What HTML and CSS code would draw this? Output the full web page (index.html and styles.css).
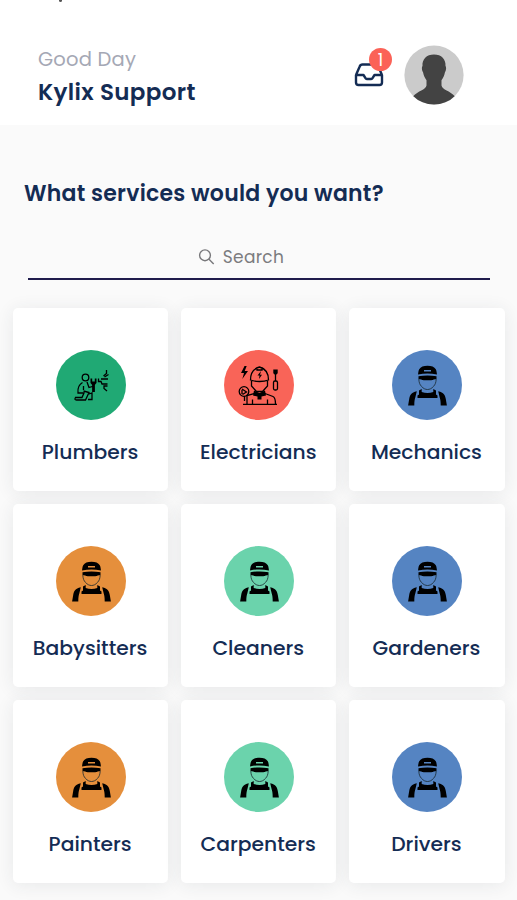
FILE: index.html
```html
<!DOCTYPE html>
<html lang="en">
<head>
  <meta charset="UTF-8">
  <meta name="viewport" content="width=device-width, initial-scale=1.0">
  <title>Services</title>
  <link rel="stylesheet" href="styles.css">
</head>
<body>
  <!-- shared worker icon -->
  <svg class="sprite" aria-hidden="true">
    <symbol id="worker" viewBox="-0.5 0 70 70">
      <path fill-rule="evenodd" d="M25.500 24.500c.3-1.400.3-3.500 1.200-5.200C28.200 16.700 31 15.700 35 15.700s6.800 1 8.300 3.600c.9 1.700.9 3.800 1.200 5.200C38 23.100 32 23.100 25.500 24.500zM31.500 20v1.600h7V20z"/>
      <path d="M26 26.200c6-1 12-1 18 0v2.800c-2.200 0-3.200 1.100-5.300 1.200h-7.400c-2.100-.1-3.100-1.200-5.300-1.200z"/>
      <path class="line" d="M26.300 29c.2 3.500 1 5.700 2.600 7.300 2 2.300 4 3.200 6.100 3.200s4.100-.9 6.100-3.200c1.600-1.600 2.400-3.800 2.600-7.300"/>
      <path d="M26.500 40.500l2.700-1.500v3c3.600 1.300 8 1.300 11.600 0v-3l2.700 1.500v4l1.500 1v2.500H25v-2.500l1.500-1z"/>
      <path d="M24.300 41.200c-5.700 1-7 4.300-7.600 7.800l-1.100 6.500h6.200c0-4 .3-6.200 1-8zM45.700 41.200c5.700 1 7 4.300 7.600 7.800l1.100 6.500h-6.200c0-4-.3-6.200-1-8z"/>
    </symbol>
  </svg>

  <header class="header">
    <span class="notch"></span>
    <div class="greeting">
      <p class="hello">Good Day</p>
      <p class="user">Kylix Support</p>
    </div>
    <div class="inbox">
      <svg width="30" height="26" viewBox="0 0 30 26">
        <path d="M2 13v7.500Q2 23 4.500 23h21q2.500 0 2.500-2.500V13H20.500l-2 3.200q-.4.800-1.300.8h-4.400q-.9 0-1.300-.8L9.500 13zM2 13L5.700 4.500Q6.400 2.500 8.500 2.500h13q2.100 0 2.800 2L28 13"/>
      </svg>
      <span class="badge">1</span>
    </div>
    <svg class="avatar" width="60" height="60" viewBox="0 0 60 60">
      <defs><clipPath id="round"><circle cx="30" cy="30" r="29.600"/></clipPath></defs>
      <circle cx="30" cy="30" r="29.600" fill="#cbcbcb"/>
      <path clip-path="url(#round)" fill="#434343" d="M30 9.500c7.500 0 12 4.800 11.500 11.500 1 .8.800 4.200-.6 6.600-.6 3.400-1.800 5.600-3.400 7.600v5.300c.8 4.500 8.500 5 13.500 11V60H9v-8.500c5-6 12.700-6.500 13.500-11v-5.300c-1.600-2-2.800-4.200-3.400-7.600-1.400-2.400-1.600-5.800-.6-6.600C18 14.300 22.500 9.500 30 9.500z"/>
    </svg>
  </header>

  <main>
    <h1>What services would you want?</h1>

    <div class="search">
      <svg width="17" height="17" viewBox="0 0 17 17">
        <circle cx="7" cy="7.300" r="5.400"/>
        <path d="M11 11.300l4.700 4.700"/>
      </svg>
      <span>Search</span>
    </div>

    <div class="grid">
      <div class="card">
        <svg class="icon green" viewBox="0 0 70 70">
          <g class="draw">
            <circle cx="29.500" cy="27.500" r="3.300"/>
            <path d="M26.500 32.500c-4 2.300-5 6-4.500 10.500h6l-2 4.500h-6.500q-1.500 2.500 1 2.500h9l3.500-7.500-5.500-1.500M31 32l2 5.500 5-1.500M33 44l3-1v6.500h-4M27.500 36v4"/>
            <path d="M50.500 20v3.500l-3 2.500M52.500 24.500l-4 2.500M42.500 28.500v3h2.500l1 2.500h5.500M45 29h7M51.500 36h-3.500v2.500l3 2.500"/>
            <path d="M37.500 33v9" stroke-width="2.800"/>
          </g>
          <path d="M34.500 28.500h1.700v3h2.600v-3h1.700v4.500l-1.800 2h-2.500l-1.700-2z"/>
        </svg>
        <p>Plumbers</p>
      </div>
      <div class="card">
        <svg class="icon red" viewBox="0 0 70 70">
          <path d="M20.500 16l-3.500 7h3l-1.700 6 5.700-8h-3.300l2-5z"/>
          <path d="M37 21l-3.500 4.500h2L35 29l3-4.300h-2zM30 40.500l5.500 2.500 5.500-2.500 1 5-4.500 1v3h-4v-3l-4.500-1z"/>
          <g class="draw">
            <path d="M26.500 30c0-8 3.500-11.500 9-13 5.500 1.500 9 5 9 13-5 2-13 2-18 0zM33 17v3h5v-3M27.500 31v5l5 5.500h6l5-5.500v-5"/>
            <path d="M30 43.500l-7 2v8.500M41 43.500l8 3q2.500 1.200 2.500 7.500M19 54.300h34M28.500 49.500v4.500M43.500 49.500v4.500"/>
            <circle cx="20" cy="41.500" r="4.800"/>
            <path d="M18 39l4.500 3-4 2.500M18 40v4M20.500 46v5"/>
            <path d="M51.500 22v9"/>
            <rect x="49.500" y="31" width="4" height="9" rx="1.500"/>
          </g>
          <path d="M49.300 19.500h4.400v3.700l-2.200 2-2.200-2z"/>
        </svg>
        <p>Electricians</p>
      </div>
      <div class="card">
        <svg class="icon blue"><use href="#worker"/></svg>
        <p>Mechanics</p>
      </div>
      <div class="card">
        <svg class="icon orange"><use href="#worker"/></svg>
        <p>Babysitters</p>
      </div>
      <div class="card">
        <svg class="icon mint"><use href="#worker"/></svg>
        <p>Cleaners</p>
      </div>
      <div class="card">
        <svg class="icon blue"><use href="#worker"/></svg>
        <p>Gardeners</p>
      </div>
      <div class="card">
        <svg class="icon orange"><use href="#worker"/></svg>
        <p>Painters</p>
      </div>
      <div class="card">
        <svg class="icon mint"><use href="#worker"/></svg>
        <p>Carpenters</p>
      </div>
      <div class="card">
        <svg class="icon blue"><use href="#worker"/></svg>
        <p>Drivers</p>
      </div>
    </div>
  </main>
</body>
</html>
```
FILE: styles.css
```css
* {
  box-sizing: border-box;
}

body {
  margin: 0;
  height: 900px;
  overflow: hidden;
  background-color: #fafafa;
  color: #142c54;
  font-family: Poppins, Inter, sans-serif;
}

p,
h1 {
  margin: 0;
}

.sprite {
  position: absolute;
  width: 0;
  height: 0;
}

.header {
  position: relative;
  display: flex;
  align-items: flex-start;
  height: 125px;
  padding: 45px 53px 0 38px;
  background-color: #fff;
}

/* tail of the status bar */
.notch {
  position: absolute;
  top: 0;
  left: 59px;
  width: 3px;
  height: 2px;
  border-radius: 0 0 2px 2px;
  background-color: #555;
}

.greeting {
  flex: 1;
}

.hello {
  padding-top: 1px;
  color: #a5a8b5;
  font-size: 19.5px;
  line-height: 28px;
  letter-spacing: 0.2px;
}

.user {
  font-size: 23px;
  font-weight: 600;
  line-height: 37px;
  letter-spacing: 0.35px;
}

.inbox {
  position: relative;
  margin: 17px 20px 0 0;
}

.inbox svg {
  display: block;
  fill: none;
  stroke: #142c54;
  stroke-width: 2.4;
  stroke-linejoin: round;
}

.badge {
  position: absolute;
  top: -14px;
  right: -8px;
  width: 23px;
  height: 23px;
  border-radius: 50%;
  background-color: #fb6257;
  color: #fff;
  font-size: 17px;
  line-height: 24px;
  text-align: center;
}

.avatar {
  display: block;
}

h1 {
  padding: 52px 24px 0;
  font-size: 22px;
  font-weight: 600;
  line-height: 34px;
  letter-spacing: 0.25px;
}

.search {
  display: flex;
  justify-content: center;
  align-items: center;
  gap: 8px;
  height: 45px;
  margin: 24px 27px 0 28px;
  padding-right: 36px;
  border-bottom: 2px solid #1f1c4c;
  color: #7c7c7f;
  font-size: 17px;
  letter-spacing: 0.3px;
}

.search svg {
  fill: none;
  stroke: #77777a;
  stroke-width: 1.4;
}

.grid {
  display: grid;
  grid-template-columns: repeat(3, 1fr);
  gap: 13px;
  padding: 28px 12.5px 0 13px;
}

.card {
  height: 183px;
  padding-top: 42px;
  border-radius: 5px;
  background-color: #fff;
  box-shadow: 0 2px 18px rgba(40, 60, 70, 0.09);
  text-align: center;
}

.card p {
  margin: 17px 1px 0 0;
  font-size: 20.3px;
  font-weight: 500;
  line-height: 30px;
}

.icon {
  display: block;
  width: 70px;
  height: 70px;
  margin: 0 auto;
  border-radius: 50%;
}

.draw {
  fill: none;
  stroke: #000;
  stroke-width: 1.3;
}

.line {
  fill: none;
  stroke: #1b2a30;
  stroke-width: 0.8;
}

.green {
  background-color: #20a974;
}

.red {
  background-color: #f96458;
}

.blue {
  background-color: #5584c2;
}

.orange {
  background-color: #e58f3c;
}

.mint {
  background-color: #6bd3ac;
}
```
